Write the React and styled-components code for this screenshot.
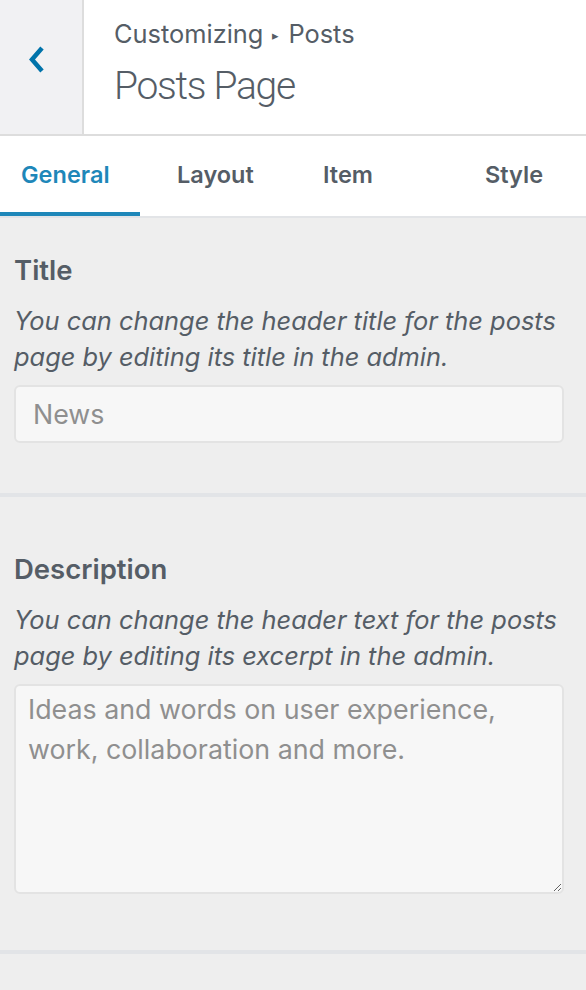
import React from 'react';
import styled, { createGlobalStyle } from 'styled-components';

const GlobalStyle = createGlobalStyle`
  html, body {
    margin: 0;
    padding: 0;
    background: #eeeeee;
  }
  body {
    font-family: Inter, 'Noto Sans', sans-serif;
    color: #555d66;
  }
`;

const Panel = styled.div`
  width: 586px;
  min-height: 990px;
  background: #eeeeee;
`;

const Header = styled.header`
  display: flex;
  height: 134px;
  background: #fff;
  border-bottom: 2px solid #dddddd;
`;

const BackButton = styled.button`
  width: 84px;
  flex: none;
  display: flex;
  align-items: flex-start;
  justify-content: flex-start;
  padding: 45px 0 0 26px;
  background: #f1f1f3;
  border: none;
  border-right: 2px solid #dddddd;
  color: #0073aa;
  cursor: pointer;
`;

const HeaderText = styled.div`
  display: flex;
  flex-direction: column;
  padding: 16px 0 0 30px;
`;

const Crumb = styled.div`
  font-size: 25.4px;
  font-weight: 400;
  color: #555d66;
  line-height: 36px;

  span {
    font-size: 13px;
    margin: 0 9px;
    position: relative;
    top: -3px;
  }
`;

const PageTitle = styled.h1`
  margin: 6px 0 0;
  font-family: Roboto, 'Helvetica Neue', sans-serif;
  font-weight: 300;
  font-size: 39px;
  letter-spacing: -1.3px;
  line-height: 48px;
  color: #555d66;
`;

const Tabs = styled.nav`
  display: flex;
  height: 80px;
  background: #fff;
  border-bottom: 2px solid #e2e4e7;
`;

const Tab = styled.div`
  width: ${p => p.$w}px;
  flex: none;
  box-sizing: border-box;
  padding-left: ${p => p.$pl}px;
  display: flex;
  align-items: center;
  font-size: 23.5px;
  font-weight: 600;
  color: ${p => (p.$active ? '#1e87b9' : '#555d66')};
  border-bottom: 4px solid ${p => (p.$active ? '#1e87b9' : 'transparent')};
`;

const Section = styled.section`
  padding: ${p => p.$top}px 22px ${p => p.$bottom}px 14px;
  border-bottom: 4px solid #e2e4e7;
`;

const Label = styled.h2`
  margin: 0;
  font-size: 27.5px;
  font-weight: 600;
  line-height: 32px;
  color: #555d66;
`;

const Help = styled.p`
  margin: 17px -14px 10px 0;
  font-size: 25.4px;
  font-style: italic;
  line-height: 36px;
  color: #555d66;
`;

const fieldBase = `
  display: block;
  width: 100%;
  box-sizing: border-box;
  font-family: Inter, 'Noto Sans', sans-serif;
  font-size: 26.8px;
  color: #555d66;
  background: #f7f7f7;
  border: 2px solid #e3e3e3;
  border-radius: 6px;
  outline: none;
  &::placeholder {
    color: #8f8f8f;
  }
`;

const TextInput = styled.input`
  ${fieldBase}
  height: 58px;
  padding: 0 17px;
`;

const TextArea = styled.textarea`
  ${fieldBase}
  height: 210px;
  padding: 3px 12px;
  line-height: 40px;
  resize: vertical;
`;

const tabs = [
  { name: 'General', w: 140, pl: 21, active: true },
  { name: 'Layout', w: 148, pl: 37 },
  { name: 'Item', w: 120, pl: 35 },
  { name: 'Style', w: 178, pl: 77 },
];

export default function App() {
  return (
    <Panel>
      <GlobalStyle />
      <Header>
        <BackButton aria-label="Back">
          <svg width="22" height="30" viewBox="0 0 22 30">
            <path d="M16 3 L6 14.5 L16 26" fill="none" stroke="currentColor" strokeWidth="4.5" />
          </svg>
        </BackButton>
        <HeaderText>
          <Crumb>
            Customizing<span>▸</span>Posts
          </Crumb>
          <PageTitle>Posts Page</PageTitle>
        </HeaderText>
      </Header>
      <Tabs>
        {tabs.map(t => (
          <Tab key={t.name} $w={t.w} $pl={t.pl} $active={t.active}>
            {t.name}
          </Tab>
        ))}
      </Tabs>
      <Section $top={36} $bottom={50}>
        <Label>Title</Label>
        <Help>You can change the header title for the posts page by editing its title in the admin.</Help>
        <TextInput placeholder="News" />
      </Section>
      <Section $top={56} $bottom={56}>
        <Label>Description</Label>
        <Help>You can change the header text for the posts page by editing its excerpt in the admin.</Help>
        <TextArea placeholder="Ideas and words on user experience, work, collaboration and more." />
      </Section>
    </Panel>
  );
}
